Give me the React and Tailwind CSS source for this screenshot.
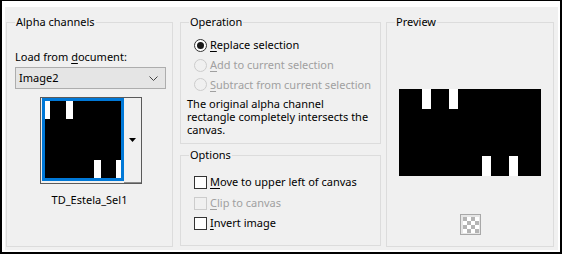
import React from 'react'

// ── small Windows-ish controls ────────────────────────────────────────────────
function Radio({ checked, disabled }) {
  return (
    <span
      className={`w-[13px] h-[13px] rounded-full border flex items-center justify-center shrink-0 ${
        disabled ? 'border-[#cccccc] bg-[#f0f0f0]' : 'border-[#333333] bg-white'
      }`}
    >
      {checked && <span className="w-[7px] h-[7px] rounded-full bg-[#1a1a1a]" />}
    </span>
  )
}

function Check({ disabled }) {
  return (
    <span
      className={`w-[13px] h-[13px] border shrink-0 ${
        disabled ? 'border-[#cccccc] bg-[#f0f0f0]' : 'border-[#333333] bg-white'
      }`}
    />
  )
}

function Group({ title, className = '', children }) {
  return (
    <fieldset className={`border border-[#dcdcdc] min-w-0 ${className}`}>
      <legend className="ml-[8px] px-[1px] leading-[16px] text-black">{title}</legend>
      {children}
    </fieldset>
  )
}

// ── thumbnails ────────────────────────────────────────────────────────────────
function Thumb() {
  return (
    <svg width="76" height="77" viewBox="0 0 76 77" className="block">
      <rect width="76" height="77" fill="#000" />
      <rect x="0" y="0" width="5" height="18" fill="#fff" />
      <rect x="21" y="0" width="7" height="18" fill="#fff" />
      <rect x="49" y="59" width="7" height="18" fill="#fff" />
      <rect x="71" y="59" width="5" height="18" fill="#fff" />
    </svg>
  )
}

function PreviewImage() {
  return (
    <svg width="142" height="87" viewBox="0 0 142 87" className="block">
      <rect width="142" height="87" fill="#000" />
      <rect x="23" y="0" width="9" height="20" fill="#fff" />
      <rect x="50" y="0" width="9" height="20" fill="#fff" />
      <rect x="83" y="67" width="9" height="20" fill="#fff" />
      <rect x="110" y="67" width="9" height="20" fill="#fff" />
    </svg>
  )
}

function CheckerIcon() {
  const cells = []
  for (let r = 0; r < 4; r++)
    for (let c = 0; c < 4; c++)
      if ((r + c) % 2 === 0) cells.push(<rect key={`${r}-${c}`} x={3 + c * 4} y={3 + r * 4} width="4" height="4" fill="#b4b4b4" />)
  return (
    <svg width="21" height="21" viewBox="0 0 21 21" className="block">
      <rect x="0.5" y="0.5" width="20" height="20" fill="#e6e6e6" stroke="#a8a8a8" />
      <rect x="3" y="3" width="16" height="16" fill="#fff" />
      {cells}
    </svg>
  )
}

// ── Main App ──────────────────────────────────────────────────────────────────
export default function App() {
  const disabled = 'text-[#a0a0a0]'
  return (
    <div className="w-[562px] h-[254px] bg-white border-black border-t border-l-2 border-r-2 border-b-2 pt-[6px] pl-[3px] pr-[2px] pb-[2px] font-['Segoe_UI','Noto_Sans',sans-serif] text-[11px] text-black whitespace-nowrap">
      <div className="h-full bg-[#f0f0f0] flex pl-[1px] pt-[7px] pb-[3px]">
        {/* Alpha channels */}
        <Group title="Alpha channels" className="w-[167px] shrink-0">
          <div className="pl-[8px] pr-[5px]">
            <div className="mt-[19px] leading-[16px]">
              Load from <u className="underline-offset-2">d</u>ocument:
            </div>
            <div className="mt-[2px] w-[151px] h-[22px] border border-[#adadad] bg-[#e5e5e5] flex items-center justify-between pl-[3px] pr-[7px]">
              <span className="leading-[16px]">Image2</span>
              <svg width="9" height="5" viewBox="0 0 9 5">
                <polyline points="0.5,0.5 4.5,4.5 8.5,0.5" fill="none" stroke="#444" strokeWidth="1" />
              </svg>
            </div>
            <div className="mt-[8px] ml-[25px] w-[102px] h-[87px] border border-[#5a5a5a] bg-[#f0f0f0] flex">
              <div className="border-[3px] border-[#0078d7] ml-[1px] h-[83px]">
                <Thumb />
              </div>
              <div className="flex-1 flex items-center justify-center border-b border-[#8a8a8a]">
                <svg width="7" height="4" viewBox="0 0 7 4">
                  <polygon points="0,0 7,0 3.5,4" fill="#000" />
                </svg>
              </div>
            </div>
          </div>
          <div className="mt-[8px] leading-[16px] text-center">TD_Estela_Sel1</div>
        </Group>

        {/* Operation + Options */}
        <div className="ml-[7px] w-[201px] shrink-0 flex flex-col pb-[1px]">
          <Group title="Operation" className="h-[130px]">
            <div className="mt-[5px] h-[20px] flex items-center gap-[3px] pl-[13px]">
              <Radio checked />
              <span className="leading-[16px]"><u className="underline-offset-2">R</u>eplace selection</span>
            </div>
            <div className={`h-[20px] flex items-center gap-[3px] pl-[13px] ${disabled}`}>
              <Radio disabled />
              <span className="leading-[16px]"><u className="underline-offset-2">A</u>dd to current selection</span>
            </div>
            <div className={`h-[19px] flex items-center gap-[3px] pl-[13px] ${disabled}`}>
              <Radio disabled />
              <span className="leading-[16px]"><u className="underline-offset-2">S</u>ubtract from current selection</span>
            </div>
            <p className="mt-[3px] pl-[6px] leading-[13px]">
              The original alpha channel
              <br />
              rectangle completely intersects the
              <br />
              canvas.
            </p>
          </Group>
          <Group title="Options" className="mt-[3px] flex-1">
            <div className="mt-[9px] h-[20px] flex items-center gap-[3px] pl-[13px]">
              <Check />
              <span className="leading-[16px]"><u className="underline-offset-2">M</u>ove to upper left of canvas</span>
            </div>
            <div className={`mt-[1px] h-[20px] flex items-center gap-[3px] pl-[13px] ${disabled}`}>
              <Check disabled />
              <span className="leading-[16px]"><u className="underline-offset-2">C</u>lip to canvas</span>
            </div>
            <div className="h-[20px] flex items-center gap-[3px] pl-[13px]">
              <Check />
              <span className="leading-[16px]"><u className="underline-offset-2">I</u>nvert image</span>
            </div>
          </Group>
        </div>

        {/* Preview */}
        <Group title="Preview" className="ml-[5px] w-[168px] shrink-0">
          <div className="flex flex-col items-center">
            <div className="mt-[59px]">
              <PreviewImage />
            </div>
            <div className="mt-[38px]">
              <CheckerIcon />
            </div>
          </div>
        </Group>
      </div>
    </div>
  )
}
